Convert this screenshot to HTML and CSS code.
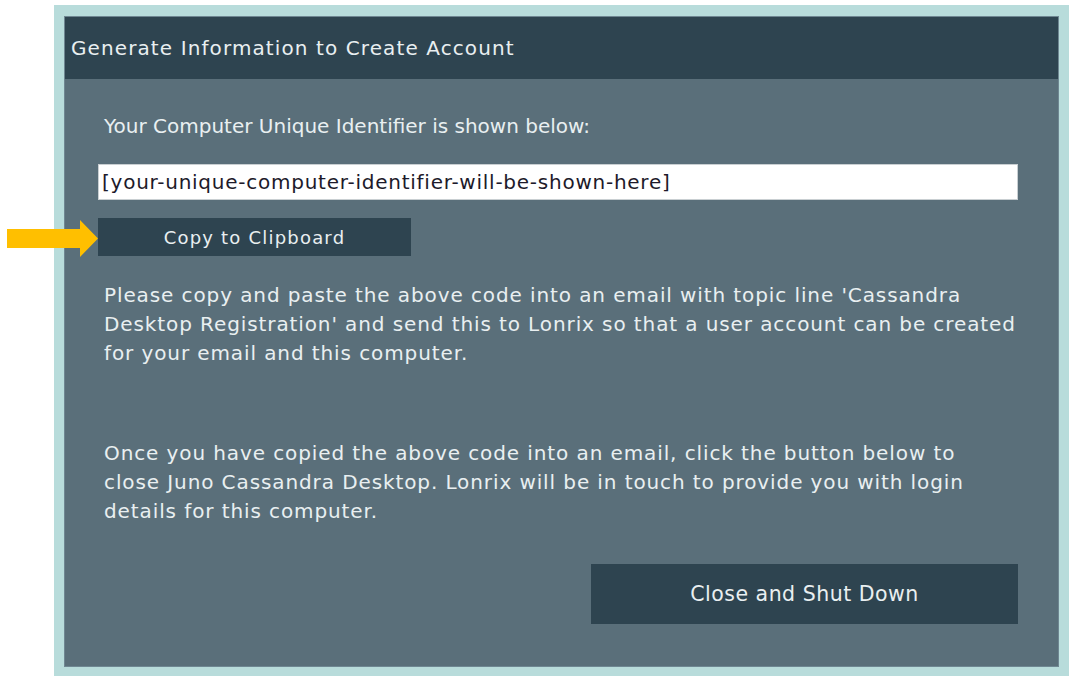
FILE: index.html
```html
<!DOCTYPE html>
<html>
<head>
<meta charset="utf-8">
<link rel="stylesheet" href="styles.css">
</head>
<body>
<div class="frame">
  <div class="panel">
    <div class="header">Generate Information to Create Account</div>
    <div class="content">
      <p class="label">Your Computer Unique Identifier is shown below:</p>
      <div class="idbox">[your-unique-computer-identifier-will-be-shown-here]</div>
      <div class="copyrow">
        <svg class="arrow" width="91" height="37" viewBox="0 0 91 37"><polygon points="0,9 73,9 73,0 91,18.5 73,37 73,28 0,28" fill="#ffbf00"/></svg>
        <div class="btn copy">Copy to Clipboard</div>
      </div>
      <p class="para">Please copy and paste the above code into an email with topic line 'Cassandra<br>Desktop Registration' and send this to Lonrix so that a user account can be created<br>for your email and this computer.</p>
      <p class="para second">Once you have copied the above code into an email, click the button below to<br>close Juno Cassandra Desktop. Lonrix will be in touch to provide you with login<br>details for this computer.</p>
      <div class="closerow"><div class="btn close">Close and Shut Down</div></div>
    </div>
  </div>
</div>
</body>
</html>
```
FILE: styles.css
```css
html, body { margin: 0; padding: 0; background: #ffffff; }
body { font-family: "DejaVu Sans", "Liberation Sans", sans-serif; }
.frame {
  position: relative;
  margin: 5px 0 0 54px;
  width: 1015px;
  height: 671px;
  box-sizing: border-box;
  background: #b8dcdb;
  padding: 11px 10px 9px 10px;
}
.panel {
  height: 100%;
  background: #5a6f7a;
  border: 1px solid #6f8792;
  box-sizing: border-box;
  display: flex;
  flex-direction: column;
}
.header {
  height: 62px;
  background: #2e4450;
  color: #e9eff1;
  font-size: 20px;
  letter-spacing: 1.1px;
  display: flex;
  align-items: center;
  padding-left: 6px;
  flex: none;
}
.content {
  padding: 0 40px 0 33px;
  display: flex;
  flex-direction: column;
  color: #e9eff1;
}
.label {
  margin: 36px 0 0 6px;
  font-size: 20px;
  line-height: 22px;
}
.idbox {
  margin-top: 27px;
  height: 36px;
  background: #ffffff;
  border: 1px solid #c9cfd2;
  box-sizing: border-box;
  color: #1d1a2a;
  font-size: 20px;
  letter-spacing: 0.75px;
  display: flex;
  align-items: center;
  padding-left: 3px;
}
.copyrow {
  position: relative;
  margin-top: 18px;
  display: flex;
}
.arrow {
  position: absolute;
  left: -91px;
  top: 2px;
}
.btn {
  background: #2e4450;
  color: #e9eff1;
  display: flex;
  align-items: center;
  justify-content: center;
}
.copy {
  width: 313px;
  height: 38px;
  font-size: 18px;
  letter-spacing: 1.2px;
}
.para {
  margin: 0 0 0 6px;
  font-size: 20px;
  letter-spacing: 0.9px;
  line-height: 29px;
  white-space: nowrap;
}
.copyrow + .para { margin-top: 25px; }
.para.second { margin-top: 71px; }
.closerow {
  display: flex;
  justify-content: flex-end;
  margin-top: 38px;
}
.close {
  width: 427px;
  height: 60px;
  font-size: 20.5px;
  letter-spacing: 0.5px;
}
```
